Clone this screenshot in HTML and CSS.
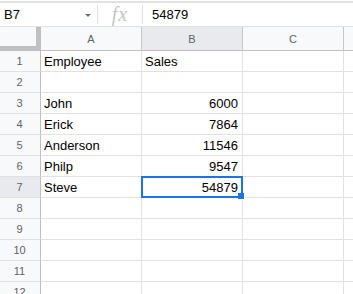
FILE: index.html
```
<!DOCTYPE html>
<html>
<head>
<meta charset="utf-8">
<link rel="stylesheet" href="styles.css">
</head>
<body>
<div class="topline"></div>
<div class="fbar">
  <div class="namebox"><span class="ref">B7</span><span class="caret"></span></div>
  <div class="sep"></div>
  <div class="fx">fx</div>
  <div class="sep"></div>
  <div class="fval">54879</div>
</div>
<div class="grid">
  <div class="corner"></div>
  <div class="ch">A</div>
  <div class="ch sel">B</div>
  <div class="ch">C</div>
  <div class="ch last"></div>

  <div class="rh">1</div><div class="c">Employee</div><div class="c">Sales</div><div class="c"></div><div class="c last"></div>
  <div class="rh">2</div><div class="c"></div><div class="c"></div><div class="c"></div><div class="c last"></div>
  <div class="rh">3</div><div class="c">John</div><div class="c num">6000</div><div class="c"></div><div class="c last"></div>
  <div class="rh">4</div><div class="c">Erick</div><div class="c num">7864</div><div class="c"></div><div class="c last"></div>
  <div class="rh">5</div><div class="c">Anderson</div><div class="c num">11546</div><div class="c"></div><div class="c last"></div>
  <div class="rh">6</div><div class="c">Philp</div><div class="c num">9547</div><div class="c"></div><div class="c last"></div>
  <div class="rh sel">7</div><div class="c">Steve</div><div class="c num">54879</div><div class="c"></div><div class="c last"></div>
  <div class="rh">8</div><div class="c"></div><div class="c"></div><div class="c"></div><div class="c last"></div>
  <div class="rh">9</div><div class="c"></div><div class="c"></div><div class="c"></div><div class="c last"></div>
  <div class="rh">10</div><div class="c"></div><div class="c"></div><div class="c"></div><div class="c last"></div>
  <div class="rh">11</div><div class="c"></div><div class="c"></div><div class="c"></div><div class="c last"></div>
  <div class="rh">12</div><div class="c"></div><div class="c"></div><div class="c"></div><div class="c last"></div>

  <div class="selection"><div class="handle"></div></div>
</div>
</body>
</html>
```
FILE: styles.css
```
html, body {
  margin: 0;
  padding: 0;
  background: #ffffff;
  overflow: hidden;
}
body {
  font-family: "Liberation Sans", Arial, sans-serif;
  font-size: 13px;
  color: #000;
  width: 353px;
  height: 294px;
}
.topline {
  margin-top: 1px;
  height: 2px;
  background: #e1e1e1;
}
.fbar {
  display: flex;
  align-items: center;
  height: 23px;
  border-bottom: 1px solid #e1e1e1;
}
.namebox {
  width: 97px;
  box-sizing: border-box;
  padding-left: 4px;
  display: flex;
  align-items: center;
  height: 100%;
}
.ref {
  font-size: 13px;
  color: #000;
  flex: 1;
}
.caret {
  width: 0;
  height: 0;
  border-left: 3px solid transparent;
  border-right: 3px solid transparent;
  border-top: 3px solid #6d6d6d;
  margin-right: 6px;
  margin-top: 1px;
}
.sep {
  width: 1px;
  height: 19px;
  background: #e1e1e1;
}
.fx {
  width: 44px;
  text-align: center;
  font-family: "Liberation Serif", "Times New Roman", serif;
  font-style: italic;
  font-size: 20px;
  color: #c4c4c4;
  line-height: 23px;
  height: 23px;
  letter-spacing: 1px;
}
.fval {
  padding-left: 9px;
  font-size: 13px;
}
.grid {
  position: relative;
  display: grid;
  grid-template-columns: 41px 101px 101px 101px 10px;
  grid-template-rows: 24px repeat(12, 21px);
}
.corner {
  box-sizing: border-box;
  background: #f8f9fa;
  border-right: 5px solid #c0c0c0;
  border-bottom: 5px solid #c0c0c0;
}
.ch {
  box-sizing: border-box;
  background: #f8f9fa;
  border-right: 1px solid #c7c7c7;
  border-bottom: 1px solid #c0c0c0;
  display: flex;
  align-items: center;
  justify-content: center;
  font-size: 11px;
  color: #5f6368;
  padding-top: 1px;
}
.ch.sel {
  background: #e8eaed;
}
.rh {
  box-sizing: border-box;
  background: #f8f9fa;
  border-right: 1px solid #c0c0c0;
  border-bottom: 1px solid #e1e1e1;
  display: flex;
  align-items: center;
  justify-content: center;
  font-size: 11px;
  color: #5f6368;
  padding-right: 1px;
}
.rh.sel {
  background: #e8eaed;
}
.c {
  box-sizing: border-box;
  border-right: 1px solid #e2e2e3;
  border-bottom: 1px solid #e2e2e3;
  display: flex;
  align-items: center;
  padding: 0 3px;
  white-space: nowrap;
  overflow: hidden;
}
.c.num {
  justify-content: flex-end;
  padding-right: 4px;
}
.last {
  border-right: none;
}
.selection {
  position: absolute;
  left: 141px;
  top: 149px;
  width: 102px;
  height: 22px;
  box-sizing: border-box;
  border: 2px solid #1a73e8;
}
.handle {
  position: absolute;
  right: -4px;
  bottom: -4px;
  width: 6px;
  height: 6px;
  background: #1a73e8;
  border: 1px solid #ffffff;
  border-top: none;
  border-left: none;
  box-sizing: content-box;
}
```
